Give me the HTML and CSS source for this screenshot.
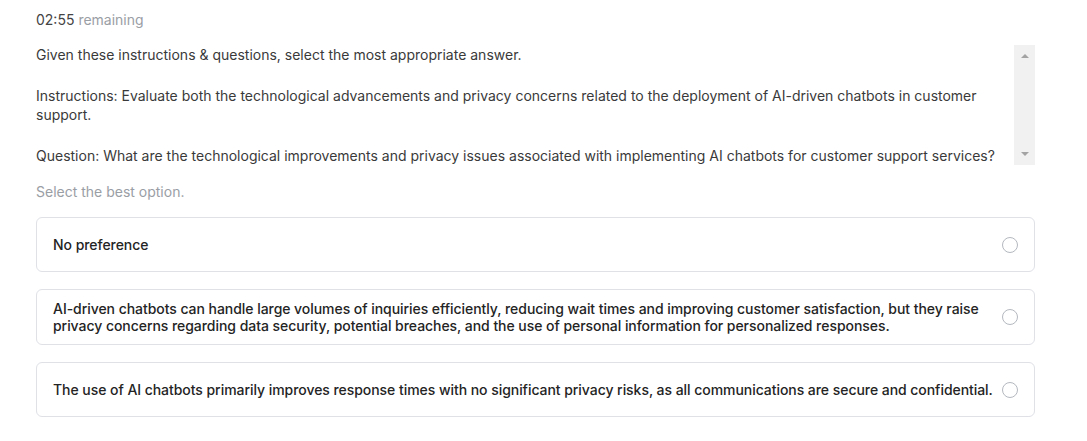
FILE: index.html
```html
<!DOCTYPE html>
<html lang="en">
<head>
    <meta charset="UTF-8">
    <meta name="viewport" content="width=device-width, initial-scale=1.0">
    <title>Question</title>
    <link rel="stylesheet" href="styles.css">
</head>
<body>

    <div class="container">
        <div class="timer"><span class="time">02:55</span> remaining</div>

        <div class="prompt-box">
            <div class="prompt-text">
                <p>Given these instructions &amp; questions, select the most appropriate answer.</p>
                <p>Instructions: Evaluate both the technological advancements and privacy concerns related to the deployment of AI-driven chatbots in customer support.</p>
                <p>Question: What are the technological improvements and privacy issues associated with implementing AI chatbots for customer support services?</p>
            </div>
            <div class="scrollbar">
                <span class="arrow up"></span>
                <span class="arrow down"></span>
            </div>
        </div>

        <div class="hint">Select the best option.</div>

        <div class="options">
            <label class="option">
                <span class="option-text">No preference</span>
                <span class="radio"></span>
            </label>
            <label class="option">
                <span class="option-text">AI-driven chatbots can handle large volumes of inquiries efficiently, reducing wait times and improving customer satisfaction, but they raise privacy concerns regarding data security, potential breaches, and the use of personal information for personalized responses.</span>
                <span class="radio"></span>
            </label>
            <label class="option">
                <span class="option-text">The use of AI chatbots primarily improves response times with no significant privacy risks, as all communications are secure and confidential.</span>
                <span class="radio"></span>
            </label>
        </div>
    </div>

</body>
</html>
```

FILE: styles.css
```css
/* Page */
body {
    margin: 0;
    background-color: #fff;
    font-family: Inter, "Noto Sans", sans-serif;
    font-size: 14px;
    color: #333;
}

.container {
    width: 999px;
    padding: 10px 36px 20px;
}

/* Timer */
.timer {
    line-height: 19px;
    color: #9a9ea5;
}

.timer .time {
    color: #444;
}

/* Prompt with its scrollbar */
.prompt-box {
    display: flex;
    height: 120px;
    margin-top: 16px;
}

.prompt-text {
    flex: 1;
    overflow: hidden;
    line-height: 19px;
    color: #3a3a3a;
}

.prompt-text p {
    margin: 0 0 22px;
}

.prompt-text p:last-child {
    margin-bottom: 0;
}

.scrollbar {
    width: 21px;
    margin-left: 8px;
    background-color: #f1f1f1;
    display: flex;
    flex-direction: column;
    justify-content: space-between;
    align-items: center;
    padding: 9px 0;
    box-sizing: border-box;
}

.arrow {
    width: 0;
    height: 0;
    border-left: 4px solid transparent;
    border-right: 4px solid transparent;
}

.arrow.up {
    border-bottom: 4px solid #a3a3a3;
}

.arrow.down {
    border-top: 4px solid #a3a3a3;
}

.hint {
    margin-top: 17px;
    line-height: 19px;
    color: #9a9ea5;
}

/* Options */
.options {
    display: flex;
    flex-direction: column;
    gap: 17px;
    margin-top: 16px;
}

.option {
    display: flex;
    align-items: center;
    gap: 4px;
    min-height: 55px;
    padding: 10px 16px;
    box-sizing: border-box;
    border: 1px solid #dfe1e6;
    border-radius: 6px;
    cursor: pointer;
}

.option-text {
    flex: 1;
    line-height: 17px;
    font-weight: 500;
    letter-spacing: -0.05px;
    color: #242424;
}

.radio {
    flex: none;
    width: 16px;
    height: 16px;
    border: 1px solid #b4b8bf;
    border-radius: 50%;
    box-sizing: border-box;
    background-color: #fff;
}
```
